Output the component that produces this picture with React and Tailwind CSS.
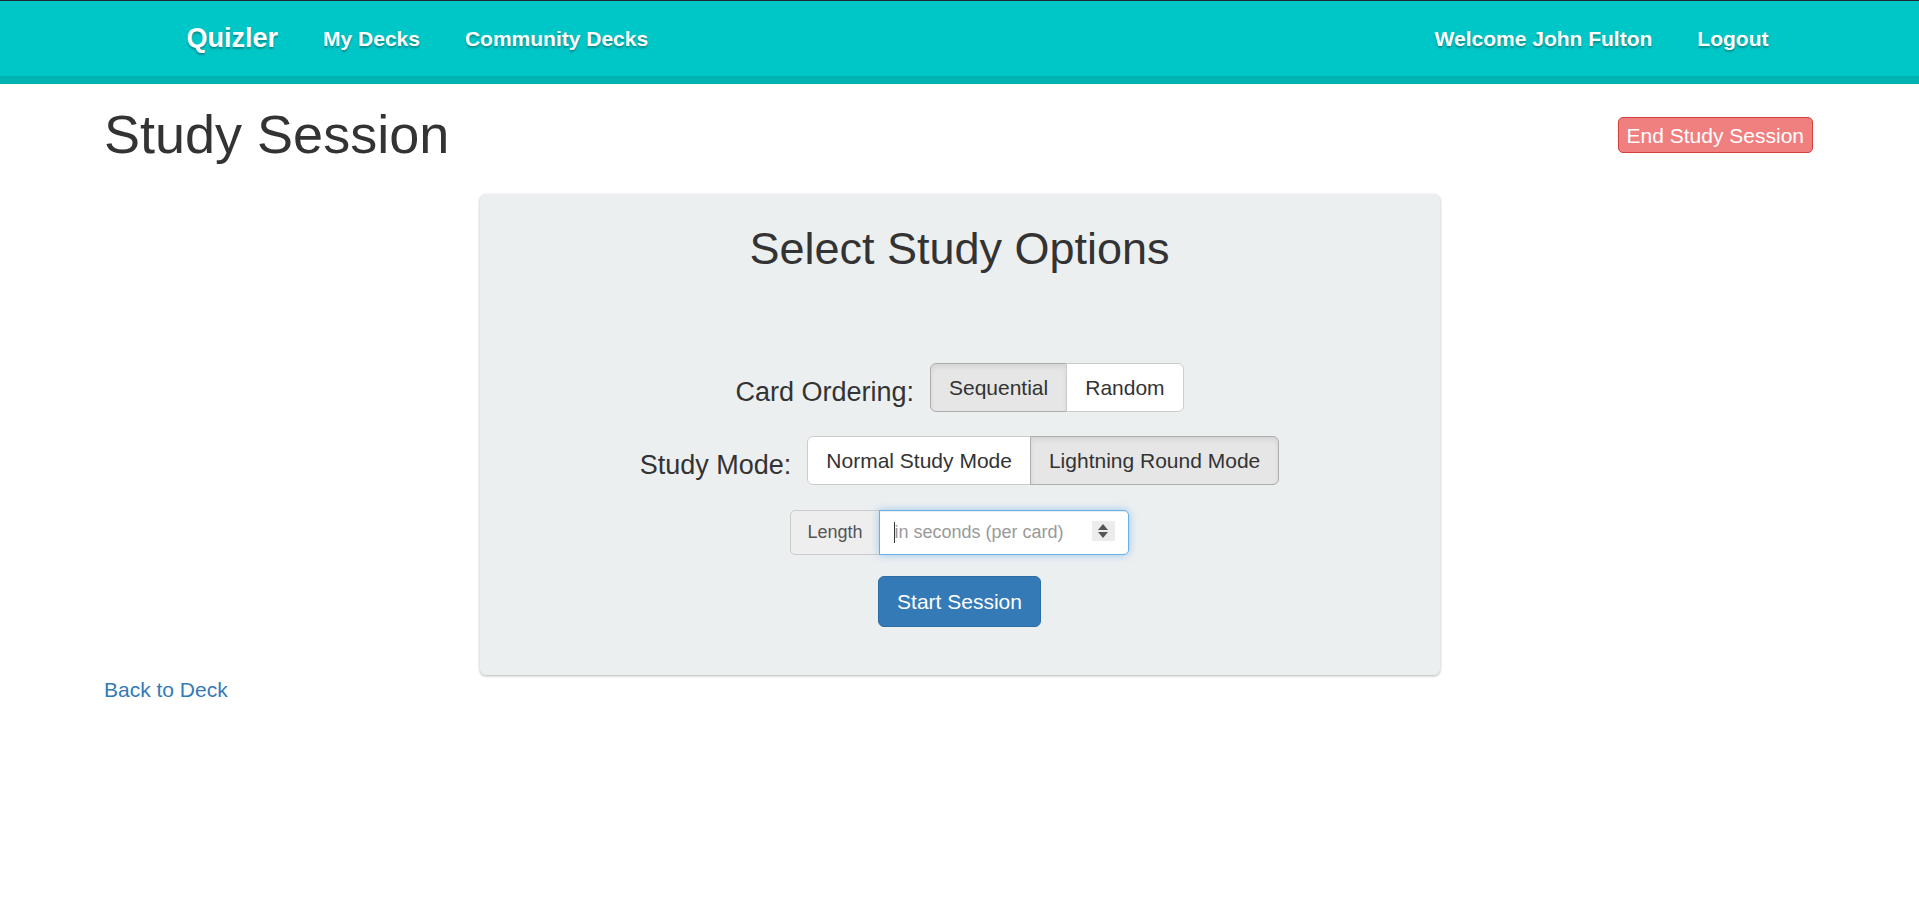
import React from "react";

export default function App() {
  return (
    <div className="min-h-[915px] bg-white font-['Liberation_Sans',Arial,sans-serif] text-[#333]">
      {/* Navbar */}
      <nav className="h-[84px] border-t border-t-[#1c2a30] border-b-[8px] border-b-[#00b3b3] bg-[#00c7c7]">
        <div className="flex h-full items-center justify-between pl-[164px] pr-[128px] text-white [text-shadow:0_2px_2px_rgba(0,0,0,0.3)]">
          <div className="flex items-center">
            <span className="px-[22.5px] text-[27px] font-bold">Quizler</span>
            <span className="px-[22.5px] text-[21px] font-bold">My Decks</span>
            <span className="px-[22.5px] text-[21px] font-bold">Community Decks</span>
          </div>
          <div className="flex items-center">
            <span className="px-[22.5px] text-[21px] font-bold">Welcome John Fulton</span>
            <span className="px-[22.5px] text-[21px] font-bold">Logout</span>
          </div>
        </div>
      </nav>

      <div className="px-[104px]">
        {/* Header row */}
        <div className="flex items-start justify-between">
          <h1 className="mt-[21px] text-[54px] leading-[1.1] font-normal text-[#333]">Study Session</h1>
          <button className="mt-[33px] mr-[2px] h-[36px] rounded-[5px] border border-[#d43f3a] bg-[#f08080] px-[8px] text-[21px] leading-none text-white">
            End Study Session
          </button>
        </div>

        {/* Card */}
        <div className="mx-auto mt-[30px] w-[960px] rounded-[6px] bg-[#eceff0] px-[20px] pt-[30px] pb-[48px] shadow-[0_1px_3px_rgba(0,0,0,0.3)]">
          <h2 className="text-center text-[45px] leading-[1.1] font-normal text-[#333]">Select Study Options</h2>

          <div className="mt-[89px] flex items-center justify-center gap-[16px]">
            <span className="mt-[10px] text-[27px] leading-[1.1] text-[#333]">Card Ordering:</span>
            <div className="flex">
              <button className="h-[49px] rounded-l-[6px] border border-[#adadad] bg-[#e6e6e6] px-[18px] text-[21px] text-[#333] shadow-[inset_0_3px_5px_rgba(0,0,0,0.08)]">
                Sequential
              </button>
              <button className="-ml-px h-[49px] rounded-r-[6px] border border-[#ccc] bg-white px-[18px] text-[21px] text-[#333]">
                Random
              </button>
            </div>
          </div>

          <div className="mt-[24px] flex items-center justify-center gap-[16px]">
            <span className="mt-[10px] text-[27px] leading-[1.1] text-[#333]">Study Mode:</span>
            <div className="flex">
              <button className="h-[49px] rounded-l-[6px] border border-[#ccc] bg-white px-[18px] text-[21px] text-[#333]">
                Normal Study Mode
              </button>
              <button className="-ml-px h-[49px] rounded-r-[6px] border border-[#adadad] bg-[#e6e6e6] px-[18px] text-[21px] text-[#333] shadow-[inset_0_3px_5px_rgba(0,0,0,0.08)]">
                Lightning Round Mode
              </button>
            </div>
          </div>

          <div className="mt-[25px] flex justify-center">
            <div className="flex h-[45px]">
              <span className="flex items-center rounded-l-[5px] border border-[#ccc] bg-[#eeeeee] px-[16px] text-[18px] text-[#555]">
                Length
              </span>
              <div className="relative -ml-px w-[250px]">
                <input
                  type="text"
                  placeholder="in seconds (per card)"
                  className="h-full w-full rounded-r-[5px] border border-[#66afe9] bg-white pl-[15px] pr-[40px] text-[18px] text-[#555] placeholder:text-[#999] outline-none shadow-[inset_0_1px_1px_rgba(0,0,0,0.075),0_0_8px_rgba(102,175,233,0.6)]"
                />
                <span className="pointer-events-none absolute left-[15px] top-[12px] h-[21px] w-px bg-[#333]" />
                <span className="pointer-events-none absolute right-[14px] top-[11px] flex h-[20px] w-[23px] flex-col items-center justify-center gap-[2px] bg-[#ececec]">
                  <svg width="10" height="6" viewBox="0 0 10 6"><path d="M0 6 L5 0 L10 6 Z" fill="#555" /></svg>
                  <svg width="10" height="6" viewBox="0 0 10 6"><path d="M0 0 L5 6 L10 0 Z" fill="#555" /></svg>
                </span>
              </div>
            </div>
          </div>

          <div className="mt-[21px] flex justify-center">
            <button className="h-[51px] rounded-[6px] border border-[#2e6da4] bg-[#337ab7] px-[18px] text-[21px] text-white">
              Start Session
            </button>
          </div>
        </div>

        <a className="block text-[21px] leading-[30px] text-[#337ab7]">Back to Deck</a>
      </div>
    </div>
  );
}
